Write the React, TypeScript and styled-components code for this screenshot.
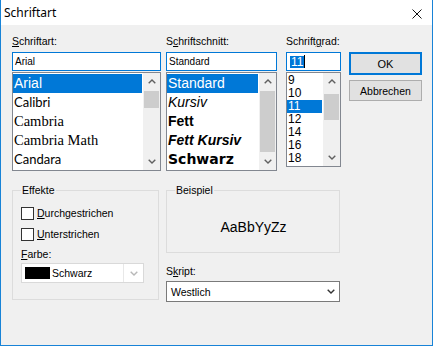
import React from "react";
import styled, { createGlobalStyle } from "styled-components";

const GlobalStyle = createGlobalStyle`
  html, body {
    margin: 0;
    padding: 0;
    background: #ffffff;
  }
  * {
    box-sizing: border-box;
  }
`;

const ui = `"Liberation Sans", Arial, sans-serif`;

const Window = styled.div`
  width: 433px;
  height: 346px;
  display: flex;
  flex-direction: column;
  border: 1px solid #1883d7;
  border-top: none;
  background: #f0f0f0;
  font-family: ${ui};
  font-size: 10.5px;
  color: #000;
  overflow: hidden;
`;

const TitleBar = styled.div`
  height: 25px;
  flex: none;
  display: flex;
  align-items: center;
  justify-content: space-between;
  padding: 0 10px 0 3px;
  background: #ffffff;
`;

const TitleText = styled.span`
  font-family: "Noto Sans", "Liberation Sans", sans-serif;
  font-size: 12px;
  line-height: 16px;
  margin-top: 1px;
`;

const CloseSvg = styled.svg`
  margin-top: 2px;
`;

const CloseIcon = () => (
  <CloseSvg width="10" height="10" viewBox="0 0 10 10">
    <path d="M0.5 0.5 L9.5 9.5 M9.5 0.5 L0.5 9.5" stroke="#111" strokeWidth="1" fill="none" />
  </CloseSvg>
);

const Content = styled.div`
  flex: 1;
  display: flex;
  flex-direction: column;
  padding: 10px 0 0 11px;
`;

const TopRow = styled.div`
  display: flex;
  align-items: flex-start;
`;

const Column = styled.div<{ $w: number; $ml?: number }>`
  width: ${(p) => p.$w}px;
  margin-left: ${(p) => p.$ml ?? 0}px;
  display: flex;
  flex-direction: column;
`;

const Label = styled.div<{ $h?: number; $mt?: number }>`
  height: ${(p) => p.$h ?? 17}px;
  margin-top: ${(p) => p.$mt ?? 0}px;
  line-height: 13px;
  white-space: nowrap;
  u {
    text-decoration: underline;
    text-underline-offset: 1px;
  }
`;

const Input = styled.div`
  height: 19px;
  border: 1px solid #0078d7;
  background: #fff;
  padding-left: 2px;
  font-size: 10px;
  line-height: 17px;
  display: flex;
  align-items: center;
`;

const Selected = styled.span`
  background: #0078d7;
  color: #fff;
  line-height: 12px;
  padding: 0 1px;
  margin-left: 1px;
  font-size: 12px;
`;

const Caret = styled.span`
  width: 1px;
  height: 13px;
  background: #000;
`;

const ListBox = styled.div<{ $h: number }>`
  margin-top: 1px;
  height: ${(p) => p.$h}px;
  border: 1px solid #828790;
  background: #fff;
  display: flex;
`;

const Items = styled.div`
  flex: 1;
  padding: 1px 1px 0 0;
  overflow: hidden;
`;

const Item = styled.div<{
  $selected?: boolean;
  $font?: string;
  $size?: number;
  $h: number;
  $weight?: number;
  $italic?: boolean;
}>`
  height: ${(p) => p.$h}px;
  line-height: ${(p) => p.$h}px;
  padding-left: 1px;
  white-space: nowrap;
  font-family: ${(p) => p.$font ?? ui};
  font-size: ${(p) => p.$size ?? 14}px;
  font-weight: ${(p) => p.$weight ?? 400};
  font-style: ${(p) => (p.$italic ? "italic" : "normal")};
  background: ${(p) => (p.$selected ? "#0078d7" : "transparent")};
  color: ${(p) => (p.$selected ? "#fff" : "#000")};
`;

const ScrollBar = styled.div`
  width: 17px;
  flex: none;
  background: #f0f0f0;
  display: flex;
  flex-direction: column;
`;

const ArrowButton = styled.div`
  height: 17px;
  flex: none;
  display: flex;
  align-items: center;
  justify-content: center;
`;

const Track = styled.div`
  flex: 1;
  display: flex;
  flex-direction: column;
`;

const Thumb = styled.div<{ $top: number; $h: number }>`
  margin: ${(p) => p.$top}px 1px 0 1px;
  height: ${(p) => p.$h}px;
  background: #cdcdcd;
`;

const Chevron = ({ up, color = "#606060" }: { up?: boolean; color?: string }) => (
  <svg width="8" height="5" viewBox="0 0 8 5">
    <path
      d={up ? "M0.7 4.3 L4 1 L7.3 4.3" : "M0.7 0.7 L4 4 L7.3 0.7"}
      stroke={color}
      strokeWidth="1.4"
      fill="none"
    />
  </svg>
);

const Scroll = ({ top, h }: { top: number; h: number }) => (
  <ScrollBar>
    <ArrowButton>
      <Chevron up />
    </ArrowButton>
    <Track>
      <Thumb $top={top} $h={h} />
    </Track>
    <ArrowButton>
      <Chevron />
    </ArrowButton>
  </ScrollBar>
);

const Button = styled.div<{ $default?: boolean; $h: number; $mt: number }>`
  height: ${(p) => p.$h}px;
  margin-top: ${(p) => p.$mt}px;
  background: #e1e1e1;
  border: ${(p) => (p.$default ? "2px solid #0078d7" : "1px solid #adadad")};
  display: flex;
  align-items: center;
  justify-content: center;
  font-size: ${(p) => (p.$default ? 11 : 10.5)}px;
`;

const BottomRow = styled.div`
  display: flex;
  align-items: flex-start;
  margin-top: 19px;
`;

const GroupBox = styled.div<{ $w: number; $h: number }>`
  position: relative;
  width: ${(p) => p.$w}px;
  height: ${(p) => p.$h}px;
  border: 1px solid #dcdcdc;
`;

const Legend = styled.span`
  position: absolute;
  top: -7px;
  left: 8px;
  padding: 0 1px;
  line-height: 13px;
  background: #f0f0f0;
`;

const EffectsBody = styled.div`
  display: flex;
  flex-direction: column;
  padding: 16px 0 0 8px;
`;

const CheckRow = styled.div<{ $mt?: number }>`
  display: flex;
  align-items: center;
  height: 13px;
  margin-top: ${(p) => p.$mt ?? 0}px;
  line-height: 13px;
  u {
    text-underline-offset: 1px;
  }
`;

const Box = styled.span`
  width: 13px;
  height: 13px;
  border: 1px solid #333;
  background: #fff;
  margin-right: 3px;
  flex: none;
`;

const ColorCombo = styled.div`
  width: 123px;
  height: 20px;
  border: 1px solid #d9d9d9;
  background: #fff;
  display: flex;
  align-items: stretch;
`;

const ColorField = styled.div`
  width: 102px;
  display: flex;
  align-items: center;
  padding-left: 3px;
  border-right: 1px solid #e8e8e8;
`;

const Swatch = styled.span`
  width: 25px;
  height: 12px;
  background: #000;
  margin-right: 2px;
`;

const ComboArrow = styled.div`
  flex: 1;
  display: flex;
  align-items: center;
  justify-content: center;
  padding-left: 1px;
`;

const SampleBody = styled.div`
  height: 100%;
  display: flex;
  align-items: center;
  justify-content: center;
  padding-top: 10px;
  padding-left: 1px;
  font-size: 14px;
`;

const Select = styled.div`
  width: 174px;
  height: 21px;
  border: 1px solid #7a7a7a;
  background: #fff;
  display: flex;
  align-items: center;
  justify-content: space-between;
  padding: 0 4px 0 4px;
  font-size: 10.5px;
`;

const fonts = [
  { name: "Arial", font: ui, size: 14 },
  { name: "Calibri", font: `Lato, "Open Sans", sans-serif`, size: 13 },
  { name: "Cambria", font: `"Liberation Serif", serif`, size: 14.5 },
  { name: "Cambria Math", font: `"Liberation Serif", serif`, size: 14.5 },
  { name: "Candara", font: `Lato, "Open Sans", sans-serif`, size: 13 },
];

const styles = [
  { name: "Standard" },
  { name: "Kursiv", italic: true },
  { name: "Fett", weight: 700 },
  { name: "Fett Kursiv", weight: 700, italic: true },
  { name: "Schwarz", weight: 700, font: `"DejaVu Sans", sans-serif` },
];

const sizes = ["9", "10", "11", "12", "14", "16", "18"];

export default function App() {
  return (
    <>
      <GlobalStyle />
      <Window>
        <TitleBar>
          <TitleText>Schriftart</TitleText>
          <CloseIcon />
        </TitleBar>
        <Content>
          <TopRow>
            <Column $w={149}>
              <Label>
                <u>S</u>chriftart:
              </Label>
              <Input>Arial</Input>
              <ListBox $h={99}>
                <Items>
                  {fonts.map((f, i) => (
                    <Item key={f.name} $h={19} $font={f.font} $size={f.size} $selected={i === 0}>
                      {f.name}
                    </Item>
                  ))}
                </Items>
                <Scroll top={1} h={17} />
              </ListBox>
            </Column>
            <Column $w={111} $ml={5}>
              <Label>
                S<u>c</u>hriftschnitt:
              </Label>
              <Input>Standard</Input>
              <ListBox $h={99}>
                <Items>
                  {styles.map((s, i) => (
                    <Item
                      key={s.name}
                      $h={19}
                      $font={s.font}
                      $weight={s.weight}
                      $italic={s.italic}
                      $selected={i === 0}
                    >
                      {s.name}
                    </Item>
                  ))}
                </Items>
                <Scroll top={1} h={61} />
              </ListBox>
            </Column>
            <Column $w={55} $ml={9}>
              <Label>
                Schrift<u>g</u>rad:
              </Label>
              <Input>
                <Selected>11</Selected>
                <Caret />
              </Input>
              <ListBox $h={95}>
                <Items>
                  {sizes.map((s) => (
                    <Item key={s} $h={13} $size={12} $selected={s === "11"}>
                      {s}
                    </Item>
                  ))}
                </Items>
                <Scroll top={4} h={26} />
              </ListBox>
            </Column>
            <Column $w={73} $ml={8}>
              <Label />
              <Button $default $h={23} $mt={0}>
                OK
              </Button>
              <Button $h={21} $mt={5}>
                Abbrechen
              </Button>
            </Column>
          </TopRow>
          <BottomRow>
            <GroupBox $w={147} $h={110}>
              <Legend>Effekte</Legend>
              <EffectsBody>
                <CheckRow>
                  <Box />
                  <span>
                    <u>D</u>urchgestrichen
                  </span>
                </CheckRow>
                <CheckRow $mt={8}>
                  <Box />
                  <span>
                    <u>U</u>nterstrichen
                  </span>
                </CheckRow>
                <Label $h={15} $mt={7}>
                  <u>F</u>arbe:
                </Label>
                <ColorCombo>
                  <ColorField>
                    <Swatch />
                    <span>Schwarz</span>
                  </ColorField>
                  <ComboArrow>
                    <Chevron color="#b8b8b8" />
                  </ComboArrow>
                </ColorCombo>
              </EffectsBody>
            </GroupBox>
            <Column $w={174} $ml={7}>
              <GroupBox $w={174} $h={63}>
                <Legend>Beispiel</Legend>
                <SampleBody>AaBbYyZz</SampleBody>
              </GroupBox>
              <Label $h={16} $mt={12}>
                S<u>k</u>ript:
              </Label>
              <Select>
                <span>Westlich</span>
                <Chevron color="#333" />
              </Select>
            </Column>
          </BottomRow>
        </Content>
      </Window>
    </>
  );
}
